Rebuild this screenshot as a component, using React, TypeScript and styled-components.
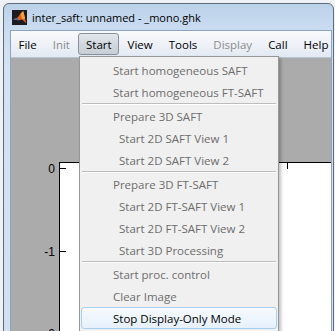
import React from 'react';
import styled, { createGlobalStyle } from 'styled-components';

const GlobalStyle = createGlobalStyle`
  html, body {
    margin: 0;
    padding: 0;
    background: #ffffff;
    overflow: hidden;
  }
  body {
    font-family: 'Open Sans', 'Noto Sans', 'DejaVu Sans', sans-serif;
    font-size: 11.5px;
  }
`;

const Page = styled.div`
  width: 335px;
  height: 331px;
  overflow: hidden;
  background: #eef2f7;
`;

const Window = styled.div`
  position: relative;
  margin: 3px 0 0 3px;
  width: 329px;
  height: 340px;
  border: 1px solid #5f6b78;
  border-radius: 6px 6px 0 0;
  background: linear-gradient(180deg, #bcd2ea 0px, #cadcf0 26px, #d4e3f3 60px, #cfe0f2 100%);
  display: flex;
  flex-direction: column;
`;

const TitleBar = styled.div`
  height: 26px;
  display: flex;
  align-items: center;
  gap: 5px;
  padding-left: 8px;
`;

const Title = styled.span`
  font-size: 11px;
  color: #000000;
`;

const Client = styled.div`
  flex: 1;
  margin: 0 1px 0 6px;
  border: 1px solid #8ea3bd;
  border-bottom: none;
  display: flex;
  flex-direction: column;
  background: #ababab;
`;

const MenuBar = styled.div`
  height: 26px;
  display: flex;
  align-items: center;
  gap: 1px;
  background: linear-gradient(180deg, #f8fafd 0%, #eef2f8 50%, #e2e9f2 100%);
  border-bottom: 1px solid #b8c4d3;
`;

const MenuItem = styled.div<{ $disabled?: boolean; $open?: boolean }>`
  height: 20px;
  padding: 0 6.5px;
  display: flex;
  align-items: center;
  border: 1px solid ${p => (p.$open ? '#8a9099' : 'transparent')};
  border-radius: 3px;
  background: ${p => (p.$open ? 'linear-gradient(180deg, #e3e7ec 0%, #d2d8df 50%, #c7ced6 100%)' : 'transparent')};
  color: ${p => (p.$disabled ? '#8d8d8d' : '#000000')};
  white-space: nowrap;
`;

const Figure = styled.div`
  flex: 1;
  overflow: hidden;
`;

const Dropdown = styled.div`
  position: absolute;
  left: 75px;
  top: 52px;
  width: 198px;
  height: 290px;
  border: 1px solid #979797;
  background: #f0f0f0;
  padding-top: 2px;
  box-shadow: 2px 2px 3px rgba(0, 0, 0, 0.25);
`;

const DropItem = styled.div<{ $indent?: boolean; $disabled?: boolean; $active?: boolean }>`
  height: 20px;
  margin: 0 1px;
  padding-left: ${p => (p.$indent ? 37 : 31)}px;
  display: flex;
  align-items: center;
  border: 1px solid ${p => (p.$active ? '#a9cfee' : 'transparent')};
  border-radius: 3px;
  background: ${p => (p.$active ? 'linear-gradient(180deg, #f6fafe 0%, #e6f0fb 100%)' : 'transparent')};
  color: ${p => (p.$disabled ? '#6d6d6d' : '#000000')};
  white-space: nowrap;
`;

const Separator = styled.div`
  height: 0;
  margin: 0 2px;
  border-top: 1px solid #bdbdbd;
  border-bottom: 1px solid #ffffff;
`;

const AppIcon = () => (
  <svg width="15" height="15" viewBox="0 0 16 16">
    <rect x="0" y="0" width="16" height="16" fill="#1b1b22" />
    <path d="M1 10 L6 8 L9 4 L12 1 L14 9 L15 14 L11 10 L7 11 Z" fill="#e0601e" />
    <path d="M9 4 L12 1 L14 9 L11 10 Z" fill="#f5a03a" />
    <path d="M1 10 L6 8 L7 11 Z" fill="#3a6fb0" />
  </svg>
);

const Axes = () => (
  <svg width="320" height="274" viewBox="0 0 320 274" style={{ display: 'block' }}>
    <rect x="48" y="104" width="272" height="170" fill="#ffffff" />
    <line x1="48.5" y1="104" x2="48.5" y2="274" stroke="#000" />
    <line x1="48" y1="104.5" x2="320" y2="104.5" stroke="#000" />
    <line x1="49" y1="110.5" x2="55" y2="110.5" stroke="#000" />
    <line x1="49" y1="193.5" x2="55" y2="193.5" stroke="#000" />
    <line x1="276.5" y1="105" x2="276.5" y2="111" stroke="#000" />
    <text x="44" y="115" textAnchor="end" fontSize="12" fontFamily="'Liberation Sans', Arial, sans-serif" fill="#000">0</text>
    <text x="44" y="198" textAnchor="end" fontSize="12" fontFamily="'Liberation Sans', Arial, sans-serif" fill="#000">-1</text>
    <text x="44" y="280" textAnchor="end" fontSize="12" fontFamily="'Liberation Sans', Arial, sans-serif" fill="#000">-2</text>
  </svg>
);

const menus = [
  { label: 'File' },
  { label: 'Init', disabled: true },
  { label: 'Start', open: true },
  { label: 'View' },
  { label: 'Tools' },
  { label: 'Display', disabled: true },
  { label: 'Call' },
  { label: 'Help' },
];

type Entry = { label?: string; indent?: boolean; sep?: boolean; active?: boolean };

const entries: Entry[] = [
  { label: 'Start homogeneous SAFT' },
  { label: 'Start homogeneous FT-SAFT' },
  { sep: true },
  { label: 'Prepare 3D SAFT' },
  { label: 'Start 2D SAFT View 1', indent: true },
  { label: 'Start 2D SAFT View 2', indent: true },
  { sep: true },
  { label: 'Prepare 3D FT-SAFT' },
  { label: 'Start 2D FT-SAFT View 1', indent: true },
  { label: 'Start 2D FT-SAFT View 2', indent: true },
  { label: 'Start 3D Processing', indent: true },
  { sep: true },
  { label: 'Start proc. control' },
  { label: 'Clear Image' },
  { label: 'Stop Display-Only Mode', active: true },
];

export default function App() {
  return (
    <Page>
      <GlobalStyle />
      <Window>
        <TitleBar>
          <AppIcon />
          <Title>inter_saft: unnamed - _mono.ghk</Title>
        </TitleBar>
        <Client>
          <MenuBar>
            {menus.map(m => (
              <MenuItem key={m.label} $disabled={m.disabled} $open={m.open}>
                {m.label}
              </MenuItem>
            ))}
          </MenuBar>
          <Figure>
            <Axes />
          </Figure>
        </Client>
        <Dropdown>
          {entries.map((e, i) =>
            e.sep ? (
              <Separator key={i} />
            ) : (
              <DropItem key={i} $indent={e.indent} $disabled={!e.active} $active={e.active}>
                {e.label}
              </DropItem>
            ),
          )}
        </Dropdown>
      </Window>
    </Page>
  );
}
